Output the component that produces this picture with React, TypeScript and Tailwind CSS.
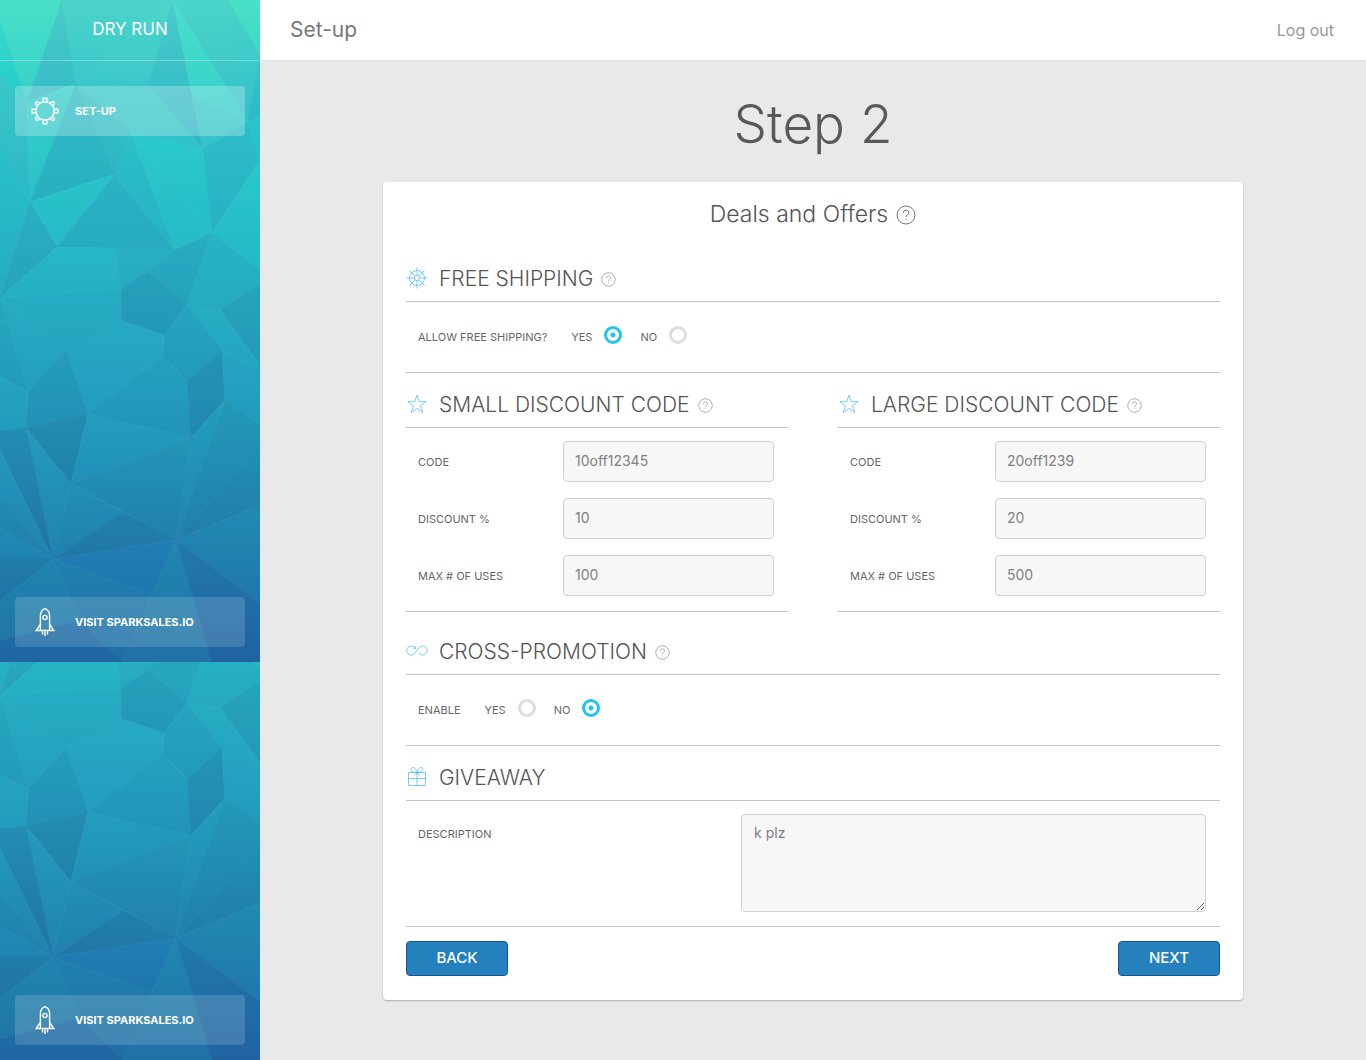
import React, { useId } from "react";

type Facet = [string, string];

const FACETS: Facet[] = [
  ["0,0 62,0 27,102 0,22", "#43dbc9"],
  ["0,22 27,102 0,75", "#2bd1ca"],
  ["62,0 76,83 27,102", "#3dc2c7"],
  ["62,0 173,0 76,83", "#46d0ca"],
  ["173,0 148,86 76,83", "#42cdca"],
  ["173,0 148,86 203,149", "#38c0c8"],
  ["173,0 193,97 248,122", "#3bd5ca"],
  ["173,0 228,0 248,122", "#43cdc9"],
  ["228,0 260,0 260,55", "#46dec9"],
  ["228,0 260,55 248,122", "#3dcac9"],
  ["260,55 248,122 260,118", "#31bcc6"],
  ["193,97 248,122 203,149", "#34c6c9"],
  ["76,83 148,86 203,149 131,132", "#33c5c9"],
  ["76,83 131,132 115,174", "#2fbcc6"],
  ["0,75 27,102 30,202 0,145", "#2fbfc9"],
  ["27,102 76,83 30,202", "#2cc9ca"],
  ["76,83 115,174 30,202", "#29b4c3"],
  ["30,202 115,174 57,247", "#28c0c8"],
  ["115,174 57,247 175,250", "#28adc1"],
  ["131,132 115,174 175,250", "#29b9c6"],
  ["131,132 203,149 212,233", "#28c5ca"],
  ["131,132 212,233 175,250", "#28c0c8"],
  ["203,149 248,122 260,160 212,233", "#2ab8c6"],
  ["248,122 260,118 260,160", "#29c2ca"],
  ["260,160 212,233 260,270", "#27bfc8"],
  ["0,145 30,202 0,298", "#27b8c6"],
  ["30,202 57,247 0,298", "#27a9c0"],
  ["57,247 115,248 121,290 0,298", "#26b4c5"],
  ["115,248 175,250 148,271 121,290", "#27adc2"],
  ["175,250 212,233 187,305 148,271", "#26a8bf"],
  ["148,271 187,305 164,335 121,321 121,290", "#259cb9"],
  ["212,233 260,270 260,284 220,310 187,305", "#26adc2"],
  ["260,284 220,310 260,365", "#259fba"],
  ["187,305 220,310 260,365 260,372 222,350", "#25a8c1"],
  ["187,305 222,350 187,381 163,356 164,335", "#249fbd"],
  ["0,298 121,290 121,321 66,350", "#25a9c1"],
  ["0,298 66,350 28,391", "#25a6c0"],
  ["0,298 28,391 0,377", "#249fbc"],
  ["121,321 164,335 163,356 88,414 66,350", "#25a5c1"],
  ["66,350 88,414 26,428 28,391", "#2396b8"],
  ["163,356 187,381 191,438 88,414", "#239abc"],
  ["222,350 187,381 191,438 225,400", "#238db2"],
  ["222,350 260,372 260,425 225,400", "#249fc0"],
  ["0,377 28,391 26,428 0,431", "#249fbe"],
  ["26,428 88,414 71,484", "#2289ae"],
  ["88,414 191,438 71,484", "#2298bd"],
  ["71,484 191,438 176,540", "#228bb2"],
  ["191,438 225,400 176,540", "#2295ba"],
  ["225,400 260,425 260,447 176,540", "#2290b6"],
  ["260,447 260,505 176,540", "#2185af"],
  ["176,540 260,505 260,603", "#2081af"],
  ["26,428 71,484 53,559", "#2290b7"],
  ["0,431 26,428 53,559 0,450", "#2286af"],
  ["0,450 53,559 0,495", "#218db6"],
  ["0,495 53,559 0,528", "#2184b0"],
  ["0,528 53,559 0,559", "#2085b3"],
  ["0,559 53,559 0,601", "#2079aa"],
  ["71,484 123,512 53,559", "#2188b3"],
  ["123,512 176,540 53,559", "#217ba9"],
  ["53,559 176,540 152,594", "#207ab1"],
  ["53,559 0,601 0,641 80,620", "#207dab"],
  ["53,559 152,594 123,662 80,620", "#2078ab"],
  ["176,540 152,594 123,662 212,662", "#2079aa"],
  ["176,540 260,603 260,662 212,662", "#206ba4"],
  ["0,641 80,620 123,662 0,662", "#1f69a4"],
];

// Backdrop colour by height; every facet is shaded along this ramp.
const RAMP: [number, number[]][] = [
  [0, [70, 214, 202]],
  [130, [44, 193, 201]],
  [250, [39, 178, 196]],
  [350, [36, 163, 190]],
  [450, [34, 147, 186]],
  [550, [32, 126, 175]],
  [662, [31, 106, 164]],
];

function rampAt(y: number): number[] {
  const i = Math.max(1, RAMP.findIndex(([stop]) => stop >= y));
  const [y0, c0] = RAMP[i - 1];
  const [y1, c1] = RAMP[i];
  const t = (y - y0) / (y1 - y0);
  return c0.map((c, k) => c + (c1[k] - c) * t);
}

const SHADED = FACETS.map(([points, hex]) => {
  const ys = points.split(" ").map((p) => Number(p.split(",")[1]));
  const top = Math.min(...ys);
  const bottom = Math.max(...ys);
  const centre = rampAt(ys.reduce((a, b) => a + b, 0) / ys.length);
  const own = [1, 3, 5].map((i) => parseInt(hex.slice(i, i + 2), 16));
  const shade = (y: number) => {
    const base = rampAt(y);
    return `rgb(${own.map((c, k) => Math.round(c + base[k] - centre[k])).join(",")})`;
  };
  return { points, top, bottom, from: shade(top), to: shade(bottom) };
});

function Facets() {
  const id = useId();
  return (
    <svg
      aria-hidden="true"
      className="absolute inset-0 h-full w-full"
      viewBox="0 0 260 662"
      preserveAspectRatio="xMidYMax slice"
    >
      <defs>
        {SHADED.map((f, i) => (
          <linearGradient key={f.points} id={`${id}${i}`} gradientUnits="userSpaceOnUse" x1="0" y1={f.top} x2="0" y2={f.bottom}>
            <stop offset="0" stopColor={f.from} />
            <stop offset="1" stopColor={f.to} />
          </linearGradient>
        ))}
      </defs>
      {SHADED.map((f, i) => (
        <polygon key={f.points} points={f.points} fill={`url(#${id}${i})`} stroke={`url(#${id}${i})`} strokeWidth="0.7" />
      ))}
    </svg>
  );
}

function GearIcon() {
  return (
    <svg aria-hidden="true" className="size-7 shrink-0" viewBox="0 0 28 28" fill="none" stroke="currentColor" strokeWidth="1.4">
      <circle cx="14" cy="14" r="9.2" />
      {[0, 90, 180, 270].map((a) => (
        <path key={a} d="M12.2 4.800V1.200h3.600v3.600" transform={`rotate(${a} 14 14)`} />
      ))}
      {[45, 135, 225, 315].map((a) => (
        <path key={a} d="M12.500 4.900V2.800a1.500 1.500 0 0 1 3 0v2.100" transform={`rotate(${a} 14 14)`} />
      ))}
    </svg>
  );
}

function RocketIcon() {
  return (
    <svg aria-hidden="true" className="size-7 shrink-0" viewBox="0 0 28 28" fill="none" stroke="currentColor" strokeWidth="1.4">
      <path d="M9.400 22.300V7.600C9.400 4 11.400 1.600 14 .6c2.600 1 4.600 3.400 4.600 7v14.700" />
      <circle cx="14" cy="9.500" r="2.100" />
      <path d="M9.400 16.500 5.200 22.500h17.600l-4.200-6M11.500 23.500v3M14 23.500v4.500M16.500 23.500v3" />
    </svg>
  );
}

function WheelIcon() {
  return (
    <svg aria-hidden="true" className="size-[22px] shrink-0" viewBox="0 0 22 22" fill="none" stroke="#5bbcf8" strokeWidth="0.8">
      <circle cx="11" cy="11" r="7.500" />
      <circle cx="11" cy="11" r="2.600" />
      {[0, 45, 90, 135, 180, 225, 270, 315].map((a) => (
        <path key={a} d="M11 8.400V.5" transform={`rotate(${a} 11 11)`} />
      ))}
    </svg>
  );
}

function StarIcon() {
  return (
    <svg aria-hidden="true" className="size-[22px] shrink-0" viewBox="0 0 22 22" fill="none" stroke="#5bbcf8" strokeWidth="0.8">
      <path d="M11 2l2.200 6.600h7l-5.600 4.200 2.100 6.700-5.700-4.100-5.700 4.100 2.100-6.700L1.800 8.600h7z" />
    </svg>
  );
}

function InfinityIcon() {
  return (
    <svg aria-hidden="true" className="size-[22px] shrink-0" viewBox="0 0 22 22" fill="none" stroke="#5bbcf8" strokeWidth="0.8">
      <path d="M9.600 8.200C8.600 6.900 7.200 6 5.200 6a4.500 4.500 0 0 0 0 9C10 15 12 6 16.800 6a4.500 4.500 0 0 1 0 9c-2 0-3.400-.9-4.400-2.200M9.800 6v2.400H7.400" />
    </svg>
  );
}

function GiftIcon() {
  return (
    <svg aria-hidden="true" className="size-[22px] shrink-0" viewBox="0 0 22 22" fill="none" stroke="#5bbcf8" strokeWidth="0.8">
      <path d="M2.500 6.500h17v13h-17zM2.500 12.500h17M11 6.500v13M11 6.500c-1-3.500-2.500-5-4-5-2.500 0-2.500 4 0 4.500 1 .2 2.500.3 4 .5 1.500-.2 3-.3 4-.5 2.500-.5 2.500-4.500 0-4.500-1.500 0-3 1.500-4 5l-2.500 3M11 6.500l2.500 3" />
    </svg>
  );
}

function Help({ large = false }: { large?: boolean }) {
  return (
    <svg
      role="img"
      aria-label="Help"
      className={large ? "size-5 shrink-0 text-[#666]" : "size-[15px] shrink-0 text-[#888]"}
      viewBox="0 0 20 20"
      fill="none"
      stroke="currentColor"
      strokeWidth="0.9"
    >
      <circle cx="10" cy="10" r="9" />
      <path d="M7.300 8c0-1.800 1.100-2.800 2.700-2.800s2.700 1 2.700 2.500c0 2-2.700 2.300-2.700 4.500M10 13.800v1.200" />
    </svg>
  );
}

function SideLink({ icon, children }: { icon: React.ReactNode; children: React.ReactNode }) {
  return (
    <a href="#" className="flex h-[50px] items-center gap-4 rounded bg-white/15 px-4 text-[11px] font-bold text-white">
      {icon}
      {children}
    </a>
  );
}

function SetupLink() {
  return (
    <a href="#" aria-current="page" className="flex h-[50px] items-center gap-4 rounded bg-white/25 px-4 text-[11px] font-bold text-white">
      <GearIcon />
      SET-UP
    </a>
  );
}

function SectionHeading({ icon, title, help = true }: { icon: React.ReactNode; title: string; help?: boolean }) {
  return (
    <h3 className="flex h-[55px] items-center gap-[11px] border-b border-[#c4c4c4] pt-2 text-[21px] font-light text-[#555]">
      {icon}
      <span className="flex items-center gap-2 pt-0.5">
        {title}
        {help && <Help />}
      </span>
    </h3>
  );
}

function Radio({ name, label, checked = false }: { name: string; label: string; checked?: boolean }) {
  return (
    <label className="flex items-center gap-3">
      {label}
      <input
        type="radio"
        name={name}
        defaultChecked={checked}
        className="mb-1 size-[18px] appearance-none rounded-full border-3 border-[#ddd] checked:border-[#23c4ec] checked:bg-[radial-gradient(circle,#23c4ec_2px,transparent_3px)]"
      />
    </label>
  );
}

function YesNo({ legend, name, value }: { legend: string; name: string; value: "yes" | "no" }) {
  return (
    <div role="radiogroup" aria-label={legend} className="flex h-[71px] items-center border-b border-[#c4c4c4] pl-3 text-[11px] text-[#666]">
      <span className="mr-6">{legend}</span>
      <div className="flex gap-[18px]">
        <Radio name={name} label="YES" checked={value === "yes"} />
        <Radio name={name} label="NO" checked={value === "no"} />
      </div>
    </div>
  );
}

function Field({ label, value }: { label: string; value: string }) {
  const id = useId();
  return (
    <div className="flex items-center">
      <label htmlFor={id} className="w-[145px] shrink-0 pt-0.5 text-[11px] text-[#666]">
        {label}
      </label>
      <input
        id={id}
        defaultValue={value}
        className="h-[41px] min-w-0 flex-1 rounded border border-[#d0d0d0] bg-[#f7f7f7] px-[11px] pb-0.5 text-sm text-[#808080]"
      />
    </div>
  );
}

function DiscountSection({ title, fields }: { title: string; fields: [string, string][] }) {
  return (
    <section>
      <SectionHeading icon={<StarIcon />} title={title} />
      <div className="flex flex-col gap-4 border-b border-[#c4c4c4] pt-[13px] pr-3.5 pb-[15px] pl-3">
        {fields.map(([label, value]) => (
          <Field key={label} label={label} value={value} />
        ))}
      </div>
    </section>
  );
}

const buttonClass =
  "h-[35px] w-[102px] rounded border border-[#15598a] bg-[#2580be] text-[15px] font-medium text-white";

export default function App() {
  return (
    <div className="flex min-h-screen bg-[#e9e9e9] font-['Inter',sans-serif]">
      <aside className="flex w-[260px] shrink-0 flex-col">
        <div className="relative h-[662px] overflow-hidden">
          <Facets />
          <div className="relative flex h-full flex-col">
            <div className="flex h-[61px] items-center justify-center border-b border-white/30 text-[17px] text-white">
              DRY RUN
            </div>
            <nav className="flex flex-1 flex-col justify-between px-[15px] pt-[25px] pb-[15px]">
              <SetupLink />
              <SideLink icon={<RocketIcon />}>VISIT SPARKSALES.IO</SideLink>
            </nav>
          </div>
        </div>
        <div className="relative flex min-h-[398px] flex-1 flex-col justify-end overflow-hidden">
          <Facets />
          <div className="relative px-[15px] pb-[15px]">
            <SideLink icon={<RocketIcon />}>VISIT SPARKSALES.IO</SideLink>
          </div>
        </div>
      </aside>

      <div className="min-w-0 flex-1">
        <header className="flex h-[61px] items-center justify-between border-b border-[#e2e2e2] bg-white pr-8 pl-[30px]">
          <span className="text-[21px] text-[#777]">Set-up</span>
          <a href="#" className="text-base text-[#999]">
            Log out
          </a>
        </header>

        <main className="mx-auto max-w-[860px] pb-[60px]">
          <h1 className="flex h-[121px] items-center justify-center pt-1.5 text-[53px] font-light text-[#595959]">
            Step 2
          </h1>

          <form className="rounded bg-white px-[23px] pb-6 shadow-[0_1px_2px_rgba(0,0,0,0.25)]" onSubmit={(e) => e.preventDefault()}>
            <h2 className="flex h-[65px] items-center justify-center gap-2 text-[23px] font-light text-[#555]">
              Deals and Offers <Help large />
            </h2>

            <section>
              <SectionHeading icon={<WheelIcon />} title="FREE SHIPPING" />
              <YesNo legend="ALLOW FREE SHIPPING?" name="shipping" value="yes" />
            </section>

            <div className="grid grid-cols-2 gap-[50px]">
              <DiscountSection
                title="SMALL DISCOUNT CODE"
                fields={[
                  ["CODE", "10off12345"],
                  ["DISCOUNT %", "10"],
                  ["MAX # OF USES", "100"],
                ]}
              />
              <DiscountSection
                title="LARGE DISCOUNT CODE"
                fields={[
                  ["CODE", "20off1239"],
                  ["DISCOUNT %", "20"],
                  ["MAX # OF USES", "500"],
                ]}
              />
            </div>

            <section className="pt-2">
              <SectionHeading icon={<InfinityIcon />} title="CROSS-PROMOTION" />
              <YesNo legend="ENABLE" name="cross" value="no" />
            </section>

            <section>
              <SectionHeading icon={<GiftIcon />} title="GIVEAWAY" help={false} />
              <div className="flex items-start justify-between border-b border-[#c4c4c4] pt-[13px] pr-3.5 pb-3.5 pl-3">
                <label htmlFor="description" className="pt-3 text-[11px] text-[#666]">
                  DESCRIPTION
                </label>
                <textarea
                  id="description"
                  defaultValue="k plz"
                  className="h-[98px] w-[59%] resize rounded border border-[#d0d0d0] bg-[#f7f7f7] px-3 py-2 text-sm text-[#808080]"
                />
              </div>
            </section>

            <div className="flex justify-between pt-3.5">
              <button type="button" className={buttonClass}>
                BACK
              </button>
              <button type="submit" className={buttonClass}>
                NEXT
              </button>
            </div>
          </form>
        </main>
      </div>
    </div>
  );
}
